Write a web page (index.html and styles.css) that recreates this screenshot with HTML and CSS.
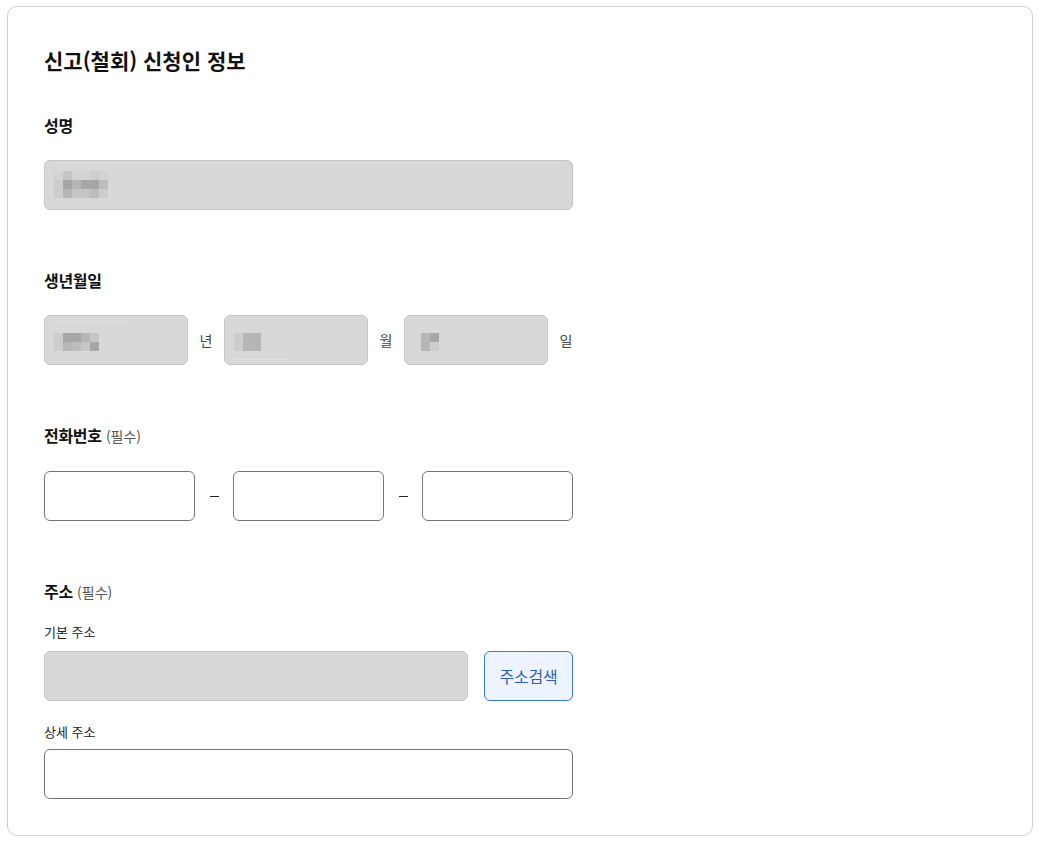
FILE: index.html
```html
<!DOCTYPE html>
<html lang="ko">
<head>
<meta charset="utf-8">
<title>신고(철회) 신청인 정보</title>
<link rel="stylesheet" href="styles.css">
</head>
<body>
<section class="card">
  <h2 class="title">신고(철회) 신청인 정보</h2>

  <div class="group">
    <div class="label">성명</div>
    <div class="field field-wide disabled">
      <div class="mosaic cols-6">
        <span class="c1"></span><span class="c2"></span><span class="c1"></span><span class="c1"></span><span class="c6"></span><span class="c1"></span>
        <span class="c6"></span><span class="c3"></span><span class="c4"></span><span class="c3"></span><span class="c3"></span><span class="c5"></span>
        <span class="c6"></span><span class="c4"></span><span class="c2"></span><span class="c2"></span><span class="c5"></span><span class="c6"></span>
      </div>
    </div>
  </div>

  <div class="group">
    <div class="label">생년월일</div>
    <div class="birth">
      <div class="field disabled">
        <span class="ghost-line top"></span>
        <div class="mosaic cols-5">
          <span class="c6"></span><span class="c3"></span><span class="c3"></span><span class="c4"></span><span class="c2"></span>
          <span class="c6"></span><span class="c4"></span><span class="c5"></span><span class="c2"></span><span class="c3"></span>
        </div>
      </div>
      <span class="unit">년</span>
      <div class="field disabled">
        <div class="mosaic cols-3">
          <span class="c6"></span><span class="c4"></span><span class="c4"></span>
          <span class="c6"></span><span class="c4"></span><span class="c4"></span>
        </div>
        <span class="ghost-line bottom"></span>
      </div>
      <span class="unit">월</span>
      <div class="field disabled">
        <div class="mosaic cols-2 day">
          <span class="c4"></span><span class="c3"></span>
          <span class="c4"></span><span class="c6"></span>
        </div>
      </div>
      <span class="unit">일</span>
    </div>
  </div>

  <div class="group">
    <div class="label">전화번호 <span class="req">(필수)</span></div>
    <div class="phone">
      <input class="field input" type="text" aria-label="전화번호 앞자리">
      <span class="dash"></span>
      <input class="field input" type="text" aria-label="전화번호 가운데">
      <span class="dash"></span>
      <input class="field input" type="text" aria-label="전화번호 끝자리">
    </div>
  </div>

  <div class="group address">
    <div class="label">주소 <span class="req">(필수)</span></div>
    <div class="sublabel first">기본 주소</div>
    <div class="addr-row">
      <div class="field disabled grow"></div>
      <button class="search" type="button">주소검색</button>
    </div>
    <div class="sublabel second">상세 주소</div>
    <input class="field input field-wide" type="text" aria-label="상세 주소">
  </div>
</section>
</body>
</html>
```

FILE: styles.css
```css
* { box-sizing: border-box; }

html, body {
  margin: 0;
  background: #ffffff;
}

body {
  padding: 6px 7px 0 7px;
  font-family: "Noto Sans CJK KR", "Noto Sans", "Liberation Sans", sans-serif;
  color: #111111;
}

.card {
  width: 1026px;
  height: 830px;
  border: 1px solid #cfcfcf;
  border-radius: 10px;
  padding: 39px 36px 0 36px;
  background: #ffffff;
}

.title {
  margin: 0;
  font-size: 21px;
  line-height: 28px;
  font-weight: 700;
  color: #111111;
}

.group {
  width: 529px;
  margin-top: 58px;
}

.group:first-of-type { margin-top: 39px; }

.label {
  font-size: 16px;
  line-height: 24px;
  font-weight: 700;
  color: #111111;
  margin-bottom: 23px;
  letter-spacing: -0.3px;
}

.req {
  font-size: 14px;
  font-weight: 400;
  color: #555555;
  letter-spacing: 0;
}

.field {
  display: block;
  position: relative;
  height: 50px;
  border-radius: 6px;
  border: 1px solid #757575;
  background: #ffffff;
}

.field.disabled {
  border-color: #c6c6c6;
  background: #d8d8d8;
}

.field-wide { width: 529px; }

.input {
  margin: 0;
  padding: 0 12px;
  width: 100%;
  font: inherit;
  outline: none;
}

.mosaic {
  display: grid;
  grid-auto-rows: 9px;
  position: absolute;
  left: 9px;
  top: 10px;
}

.birth .mosaic { top: 17px; }
.birth .mosaic.day { left: 16px; }

.cols-6 { grid-template-columns: repeat(6, 9px); }
.cols-5 { grid-template-columns: repeat(5, 9px); }
.cols-3 { grid-template-columns: repeat(3, 9px); }
.cols-2 { grid-template-columns: repeat(2, 9px); }

.c1 { background: #d3d3d3; }
.c2 { background: #c4c5c6; }
.c3 { background: #a5a6a7; }
.c4 { background: #b5b6b7; }
.c5 { background: #bdbdbd; }
.c6 { background: #cdcdcd; }

.ghost-line {
  position: absolute;
  height: 1px;
  background: #e2e2e2;
}
.ghost-line.top { left: 9px; top: 5px; width: 72px; }
.ghost-line.bottom { left: 9px; top: 43px; width: 55px; }

.birth {
  display: grid;
  grid-template-columns: 1fr 14px 1fr 14px 1fr 14px;
  column-gap: 11px;
  align-items: center;
}

.unit {
  font-size: 14px;
  color: #444444;
  text-align: center;
  white-space: nowrap;
}

.phone {
  display: grid;
  grid-template-columns: 1fr 38px 1fr 38px 1fr;
  align-items: center;
}

.phone .input { width: 100%; }

.dash {
  justify-self: center;
  width: 9px;
  height: 1px;
  background: #222222;
  margin-top: 1px;
}

.address .label { margin-bottom: 0; }

.sublabel {
  font-size: 13px;
  line-height: 18px;
  color: #222222;
}
.sublabel.first { margin-top: 19px; margin-bottom: 10px; }
.sublabel.second { margin-top: 22px; margin-bottom: 8px; }

.addr-row {
  display: flex;
  gap: 16px;
}

.grow { flex: 1; }

.search {
  width: 89px;
  height: 50px;
  border: 1px solid #3b78e0;
  border-radius: 6px;
  background: #eef4ff;
  color: #2f5fb8;
  font-family: inherit;
  font-size: 16px;
  letter-spacing: -0.2px;
  padding: 0;
  cursor: pointer;
}
```
